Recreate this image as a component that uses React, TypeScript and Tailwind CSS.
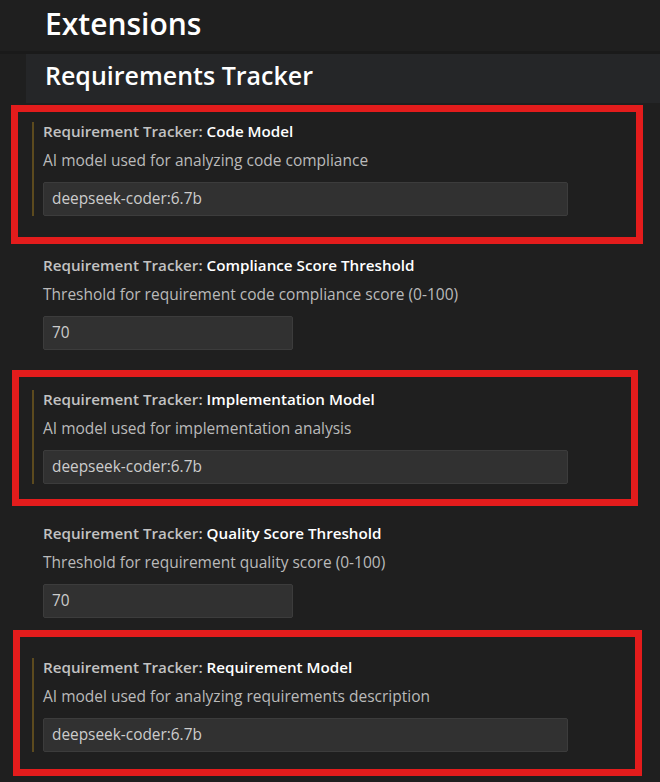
import React from "react";

type Setting = {
  name: string;
  description: string;
  value: string;
  wide: boolean;
  modified: boolean;
  box?: string;
};

const SETTINGS: Setting[] = [
  {
    name: "Code Model",
    description: "AI model used for analyzing code compliance",
    value: "deepseek-coder:6.7b",
    wide: true,
    modified: true,
    box: "ml-[11px] w-[632px] -mt-[17px] -mb-[28px] pt-[10px] pb-[21px] pl-[14px]",
  },
  {
    name: "Compliance Score Threshold",
    description: "Threshold for requirement code compliance score (0-100)",
    value: "70",
    wide: false,
    modified: false,
  },
  {
    name: "Implementation Model",
    description: "AI model used for implementation analysis",
    value: "deepseek-coder:6.7b",
    wide: true,
    modified: true,
    box: "ml-[12px] w-[626px] -mt-[20px] -mb-[22px] pt-[13px] pb-[15px] pl-[13px]",
  },
  {
    name: "Quality Score Threshold",
    description: "Threshold for requirement quality score (0-100)",
    value: "70",
    wide: false,
    modified: false,
  },
  {
    name: "Requirement Model",
    description: "AI model used for analyzing requirements description",
    value: "deepseek-coder:6.7b",
    wide: true,
    modified: true,
    box: "ml-[13px] w-[629px] -mt-[28px] -mb-[24px] pt-[21px] pb-[17px] pl-[12px]",
  },
];

function SettingItem({ setting }: { setting: Setting }) {
  return (
    <div
      className={`h-[94px] border-l-2 pl-[9px] ${
        setting.modified ? "border-[#5c4a1e]" : "border-transparent"
      }`}
    >
      <div className="h-[18px] text-[15.2px] leading-[18px] font-semibold text-[#c2c2c2]">
        Requirement Tracker: <span className="text-white">{setting.name}</span>
      </div>
      <div className="mt-[10px] h-[20px] text-[15.5px] leading-[20px] text-[#bababa]">
        {setting.description}
      </div>
      <div
        className={`mt-[12px] flex h-[34px] items-center rounded-[2px] border border-[#3c3c3c] bg-[#313131] px-[8px] text-[15.4px] text-[#cccccc] ${
          setting.wide ? "w-[525px]" : "w-[250px]"
        }`}
      >
        {setting.value}
      </div>
    </div>
  );
}

export default function App() {
  return (
    <div className="h-[782px] w-[660px] overflow-hidden bg-[#1f1f1f] font-['Open_Sans',sans-serif]">
      {/* Section header */}
      <div className="flex h-[51px] items-center pb-[4px] pl-[45px] text-[30px] font-semibold text-white">
        Extensions
      </div>
      <div className="h-[3px] bg-[#1a1a1a]" />
      <div className="ml-[26px] flex h-[49px] items-center bg-[#252628] pb-[5px] pl-[19px] text-[25px] font-semibold text-white">
        Requirements Tracker
      </div>

      {/* Settings list */}
      <div className="flex flex-col gap-[40px] pt-[19px]">
        {SETTINGS.map((s) =>
          s.box ? (
            <div key={s.name} className={`border-[7px] border-[#e31c1c] ${s.box}`}>
              <SettingItem setting={s} />
            </div>
          ) : (
            <div key={s.name} className="ml-[32px]">
              <SettingItem setting={s} />
            </div>
          )
        )}
      </div>
    </div>
  );
}
